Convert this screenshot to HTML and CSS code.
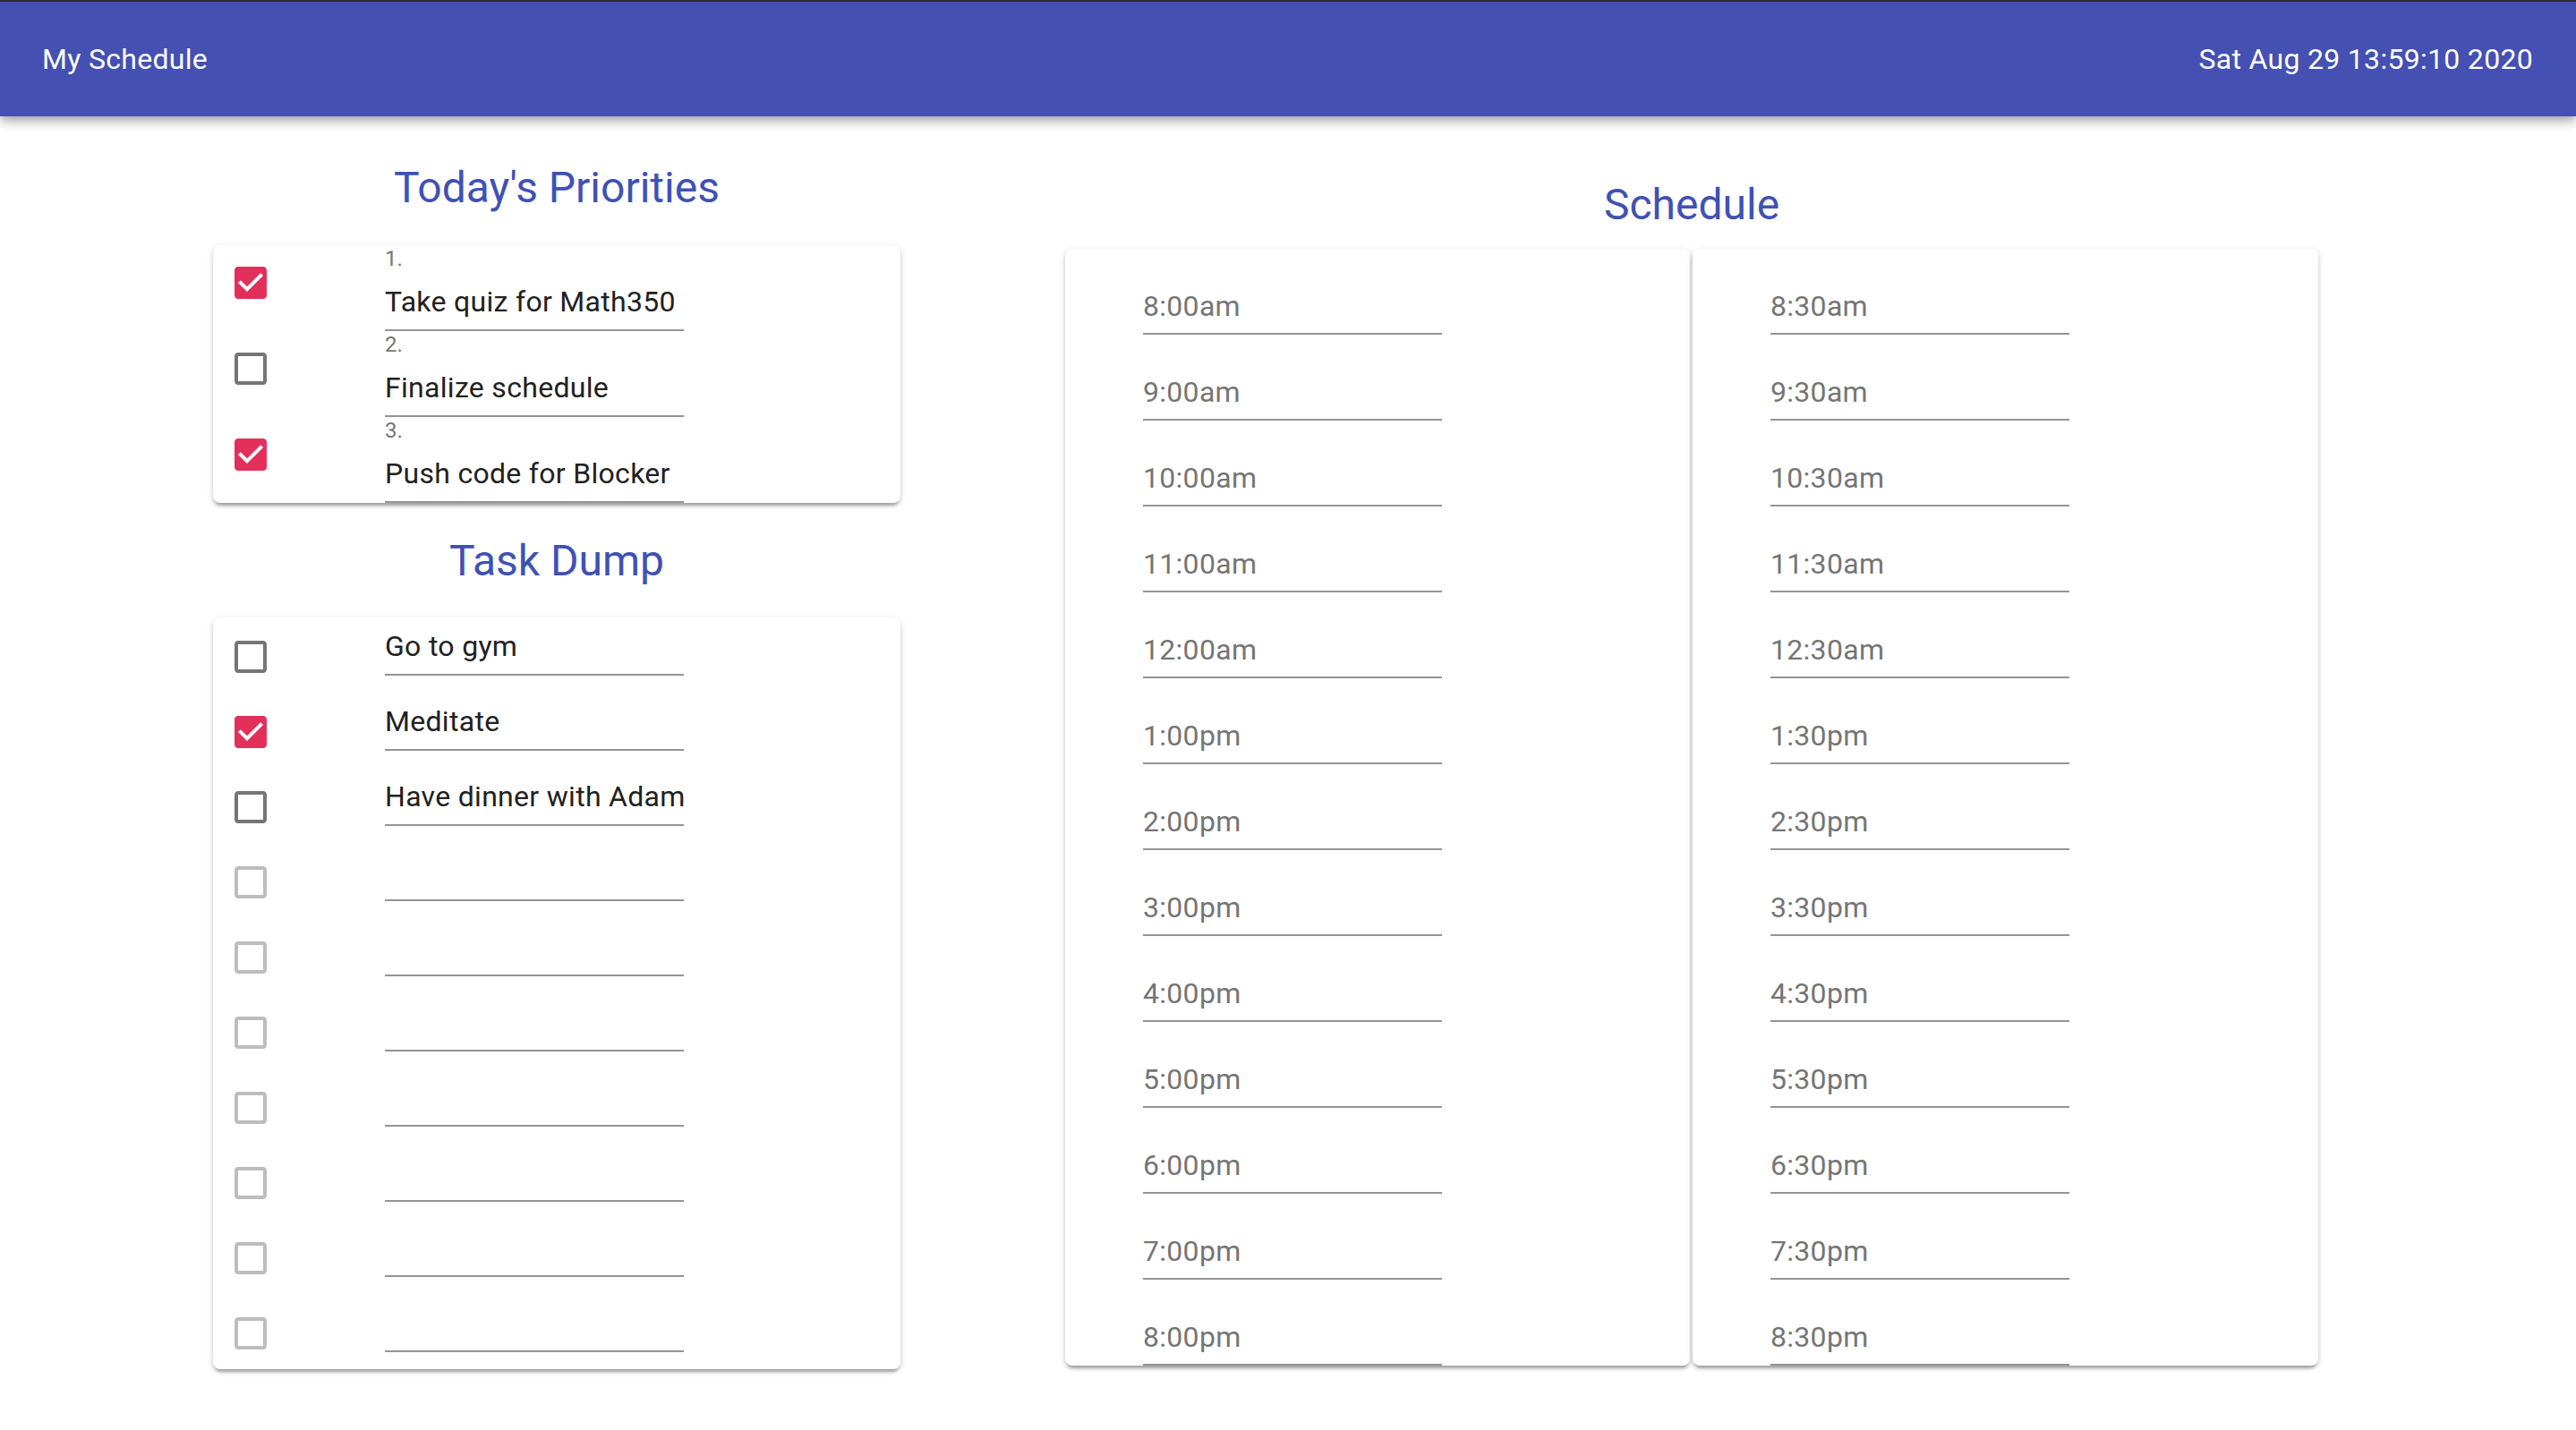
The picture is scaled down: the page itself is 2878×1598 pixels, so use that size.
FILE: index.html
```html
<!DOCTYPE html>
<html>
<head>
<meta charset="utf-8">
<title>My Schedule</title>
<link rel="stylesheet" href="styles.css">
</head>
<body>
<header class="appbar">
  <div class="appbar-title">My Schedule</div>
  <div class="appbar-date">Sat Aug 29 13:59:10 2020</div>
</header>
<main class="main">
  <section class="left">
    <h2 class="heading">Today's Priorities</h2>
    <div class="card">
      <div class="prow">
        <div class="cbcol"><span class="cb"><svg class="ico checked" viewBox="0 0 24 24"><path d="M19 3H5c-1.11 0-2 .9-2 2v14c0 1.1.89 2 2 2h14c1.11 0 2-.9 2-2V5c0-1.1-.89-2-2-2zm-9 14l-5-5 1.41-1.41L10 14.170l7.590-7.590L19 8l-9 9z"/></svg></span></div>
        <div class="field"><div class="flabel">1.</div><div class="finput">Take quiz for Math350</div></div>
      </div>
      <div class="prow">
        <div class="cbcol"><span class="cb"><svg class="ico unchecked" viewBox="0 0 24 24"><path d="M19 5v14H5V5h14m0-2H5c-1.1 0-2 .9-2 2v14c0 1.1.9 2 2 2h14c1.1 0 2-.9 2-2V5c0-1.1-.9-2-2-2z"/></svg></span></div>
        <div class="field"><div class="flabel">2.</div><div class="finput">Finalize schedule</div></div>
      </div>
      <div class="prow">
        <div class="cbcol"><span class="cb"><svg class="ico checked" viewBox="0 0 24 24"><path d="M19 3H5c-1.11 0-2 .9-2 2v14c0 1.1.89 2 2 2h14c1.11 0 2-.9 2-2V5c0-1.1-.89-2-2-2zm-9 14l-5-5 1.41-1.41L10 14.170l7.590-7.590L19 8l-9 9z"/></svg></span></div>
        <div class="field"><div class="flabel">3.</div><div class="finput">Push code for Blocker</div></div>
      </div>
    </div>
    <h2 class="heading heading-second">Task Dump</h2>
    <div class="card tcard">
      <div class="trow">
        <div class="cbcol"><span class="cb"><svg class="ico unchecked" viewBox="0 0 24 24"><path d="M19 5v14H5V5h14m0-2H5c-1.1 0-2 .9-2 2v14c0 1.1.9 2 2 2h14c1.1 0 2-.9 2-2V5c0-1.1-.9-2-2-2z"/></svg></span></div>
        <div class="field"><div class="finput">Go to gym</div></div>
      </div>
      <div class="trow">
        <div class="cbcol"><span class="cb"><svg class="ico checked" viewBox="0 0 24 24"><path d="M19 3H5c-1.11 0-2 .9-2 2v14c0 1.1.89 2 2 2h14c1.11 0 2-.9 2-2V5c0-1.1-.89-2-2-2zm-9 14l-5-5 1.41-1.41L10 14.170l7.590-7.590L19 8l-9 9z"/></svg></span></div>
        <div class="field"><div class="finput">Meditate</div></div>
      </div>
      <div class="trow">
        <div class="cbcol"><span class="cb"><svg class="ico unchecked" viewBox="0 0 24 24"><path d="M19 5v14H5V5h14m0-2H5c-1.1 0-2 .9-2 2v14c0 1.1.9 2 2 2h14c1.1 0 2-.9 2-2V5c0-1.1-.9-2-2-2z"/></svg></span></div>
        <div class="field"><div class="finput">Have dinner with Adam</div></div>
      </div>
      <div class="trow">
        <div class="cbcol"><span class="cb"><svg class="ico disabled" viewBox="0 0 24 24"><path d="M19 5v14H5V5h14m0-2H5c-1.1 0-2 .9-2 2v14c0 1.1.9 2 2 2h14c1.1 0 2-.9 2-2V5c0-1.1-.9-2-2-2z"/></svg></span></div>
        <div class="field"><div class="finput"></div></div>
      </div>
      <div class="trow">
        <div class="cbcol"><span class="cb"><svg class="ico disabled" viewBox="0 0 24 24"><path d="M19 5v14H5V5h14m0-2H5c-1.1 0-2 .9-2 2v14c0 1.1.9 2 2 2h14c1.1 0 2-.9 2-2V5c0-1.1-.9-2-2-2z"/></svg></span></div>
        <div class="field"><div class="finput"></div></div>
      </div>
      <div class="trow">
        <div class="cbcol"><span class="cb"><svg class="ico disabled" viewBox="0 0 24 24"><path d="M19 5v14H5V5h14m0-2H5c-1.1 0-2 .9-2 2v14c0 1.1.9 2 2 2h14c1.1 0 2-.9 2-2V5c0-1.1-.9-2-2-2z"/></svg></span></div>
        <div class="field"><div class="finput"></div></div>
      </div>
      <div class="trow">
        <div class="cbcol"><span class="cb"><svg class="ico disabled" viewBox="0 0 24 24"><path d="M19 5v14H5V5h14m0-2H5c-1.1 0-2 .9-2 2v14c0 1.1.9 2 2 2h14c1.1 0 2-.9 2-2V5c0-1.1-.9-2-2-2z"/></svg></span></div>
        <div class="field"><div class="finput"></div></div>
      </div>
      <div class="trow">
        <div class="cbcol"><span class="cb"><svg class="ico disabled" viewBox="0 0 24 24"><path d="M19 5v14H5V5h14m0-2H5c-1.1 0-2 .9-2 2v14c0 1.1.9 2 2 2h14c1.1 0 2-.9 2-2V5c0-1.1-.9-2-2-2z"/></svg></span></div>
        <div class="field"><div class="finput"></div></div>
      </div>
      <div class="trow">
        <div class="cbcol"><span class="cb"><svg class="ico disabled" viewBox="0 0 24 24"><path d="M19 5v14H5V5h14m0-2H5c-1.1 0-2 .9-2 2v14c0 1.1.9 2 2 2h14c1.1 0 2-.9 2-2V5c0-1.1-.9-2-2-2z"/></svg></span></div>
        <div class="field"><div class="finput"></div></div>
      </div>
      <div class="trow">
        <div class="cbcol"><span class="cb"><svg class="ico disabled" viewBox="0 0 24 24"><path d="M19 5v14H5V5h14m0-2H5c-1.1 0-2 .9-2 2v14c0 1.1.9 2 2 2h14c1.1 0 2-.9 2-2V5c0-1.1-.9-2-2-2z"/></svg></span></div>
        <div class="field"><div class="finput"></div></div>
      </div>
    </div>
  </section>
  <section class="right">
    <h2 class="heading heading-schedule">Schedule</h2>
    <div class="sched">
      <div class="card scard">
        <div class="slot"><div class="sline">8:00am</div></div>
        <div class="slot"><div class="sline">9:00am</div></div>
        <div class="slot"><div class="sline">10:00am</div></div>
        <div class="slot"><div class="sline">11:00am</div></div>
        <div class="slot"><div class="sline">12:00am</div></div>
        <div class="slot"><div class="sline">1:00pm</div></div>
        <div class="slot"><div class="sline">2:00pm</div></div>
        <div class="slot"><div class="sline">3:00pm</div></div>
        <div class="slot"><div class="sline">4:00pm</div></div>
        <div class="slot"><div class="sline">5:00pm</div></div>
        <div class="slot"><div class="sline">6:00pm</div></div>
        <div class="slot"><div class="sline">7:00pm</div></div>
        <div class="slot"><div class="sline">8:00pm</div></div>
      </div>
      <div class="card scard">
        <div class="slot"><div class="sline">8:30am</div></div>
        <div class="slot"><div class="sline">9:30am</div></div>
        <div class="slot"><div class="sline">10:30am</div></div>
        <div class="slot"><div class="sline">11:30am</div></div>
        <div class="slot"><div class="sline">12:30am</div></div>
        <div class="slot"><div class="sline">1:30pm</div></div>
        <div class="slot"><div class="sline">2:30pm</div></div>
        <div class="slot"><div class="sline">3:30pm</div></div>
        <div class="slot"><div class="sline">4:30pm</div></div>
        <div class="slot"><div class="sline">5:30pm</div></div>
        <div class="slot"><div class="sline">6:30pm</div></div>
        <div class="slot"><div class="sline">7:30pm</div></div>
        <div class="slot"><div class="sline">8:30pm</div></div>
      </div>
    </div>
  </section>
</main>
</body>
</html>
```
FILE: styles.css
```css
* { box-sizing: border-box; }
html, body { margin: 0; padding: 0; }
body {
  background: #ffffff;
  border-top: 2px solid #2e2e2e;
  font-family: Roboto, "Liberation Sans", Arial, sans-serif;
  font-weight: 400;
  color: rgba(0, 0, 0, 0.87);
  min-height: 1598px;
}
.appbar {
  position: relative;
  z-index: 2;
  height: 128px;
  background: #4450b2;
  color: #ffffff;
  display: flex;
  align-items: center;
  justify-content: space-between;
  padding: 0 48px 0 47px;
  font-size: 32px;
  box-shadow: 0 4px 8px -2px rgba(0,0,0,0.2), 0 8px 10px 0 rgba(0,0,0,0.14), 0 2px 20px 0 rgba(0,0,0,0.12);
}
.appbar-title, .appbar-date { line-height: 48px; letter-spacing: 0.3px; }
.main {
  display: flex;
  align-items: flex-start;
  padding-left: 238px;
  gap: 184px;
}
.left { width: 768px; padding-top: 48px; }
.right { width: 1400px; padding-top: 67px; }
.heading {
  margin: 0 0 32px 0;
  font-size: 48px;
  line-height: 64px;
  font-weight: 400;
  color: #3f51b5;
  text-align: center;
}
.heading-second { margin-top: 33px; margin-bottom: 31px; }
.heading-schedule { margin-bottom: 17px; }
.card {
  background: #ffffff;
  border-radius: 8px;
  box-shadow: 0 6px 3px -3px rgba(0,0,0,0.2), 0 3px 4px 0 rgba(0,0,0,0.14), 0 2px 8px 0 rgba(0,0,0,0.12);
}
.prow { display: flex; align-items: flex-start; height: 96px; }
.tcard { padding-top: 1px; }
.trow { display: flex; align-items: flex-start; height: 84px; }
.trow:last-child { height: 83px; }
.cbcol { width: 192px; flex: 0 0 192px; }
.cb {
  display: block;
  width: 84px;
  height: 84px;
  padding: 18px;
}
.tcard .cb { margin-top: 1px; }
.ico { display: block; width: 48px; height: 48px; }
.checked { fill: #e2305b; }
.unchecked { fill: #757575; }
.disabled { fill: #bdbdbd; }
.field { width: 334px; }
.flabel {
  height: 32px;
  padding-top: 3px;
  font-size: 24px;
  line-height: 24px;
  color: #757575;
}
.finput {
  height: 64px;
  padding: 12px 0;
  font-size: 32px;
  line-height: 38px;
  color: #212121;
  border-bottom: 2px solid #949494;
  white-space: nowrap;
  letter-spacing: 0.3px;
}
.sched {
  display: grid;
  grid-template-columns: 698px 699px;
  column-gap: 3px;
}
.scard { padding-left: 87px; overflow: hidden; }
.slot { width: 334px; height: 96px; padding-top: 32px; }
.sline {
  height: 64px;
  padding: 13px 0 11px;
  font-size: 32px;
  line-height: 38px;
  color: #757575;
  border-bottom: 2px solid #949494;
  white-space: nowrap;
  letter-spacing: 0.3px;
}
```
